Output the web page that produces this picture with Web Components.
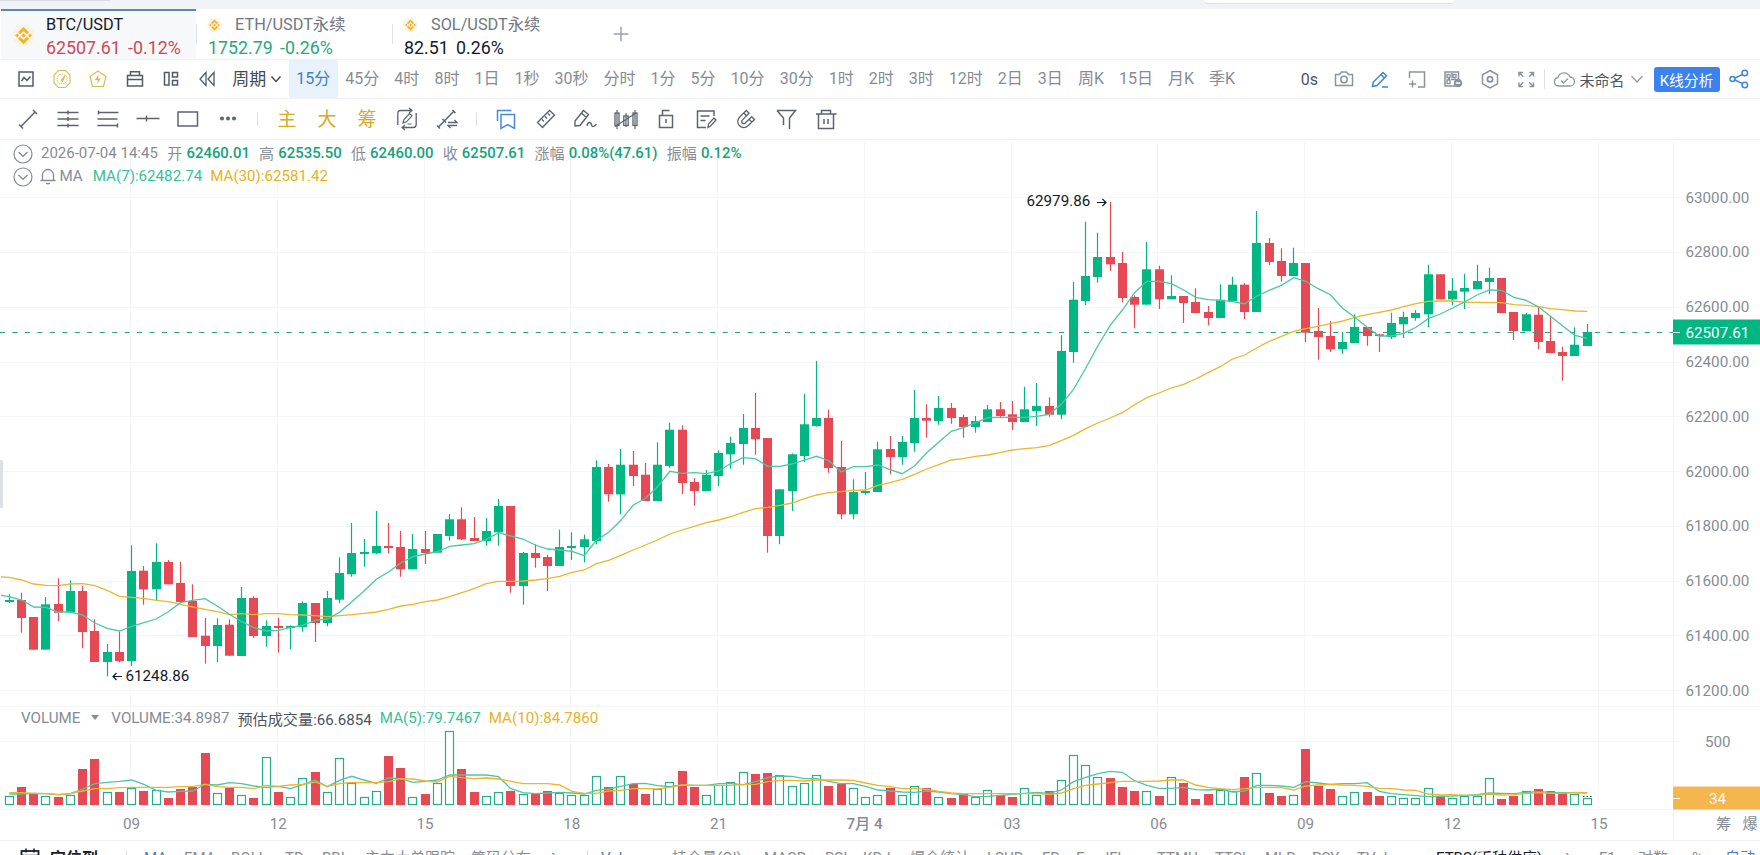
<!DOCTYPE html>
<html lang="zh-CN">
<head>
<meta charset="utf-8">
<title>BTC/USDT</title>
<style>
    html, body { margin: 0; padding: 0; }
    body {
        width: 1760px;
        height: 855px;
        overflow: hidden;
        background: #fff;
        font-family: Roboto, "Noto Sans CJK SC", sans-serif;
        font-size: 15px;
        color: #858c96;
    }
</style>
</head>
<body>
<trade-app></trade-app>

<script>
// small helper: clone a template into an open shadow root
function attach(el, html) {
    const template = document.createElement('template');
    template.innerHTML = html;
    el.attachShadow({ mode: 'open' });
    el.shadowRoot.appendChild(template.content.cloneNode(true));
}

// ---------- icons, all on a 24x24 box ----------
const ICONS = {
    chart: '<rect x="5" y="5" width="14" height="14"/><path d="M7.500 14l2.500-3.500 3 3 3.500-4"/>',
    gauge: '<path d="M8.500 3.500h7l4.500 4.500v8l-4.500 4.500h-7L4 16V8z" stroke-width="1.100"/><circle cx="12" cy="12" r="5" stroke-dasharray="1.500 1" stroke-width="1"/><path d="M11 13.500l4-5-2.500 6z" fill="currentColor" stroke-width="1"/>',
    bolt: '<path d="M12 4l8 5.500-2.500 10h-11L4 9.500z" stroke-width="1.200"/><path d="M12.800 7.500l-4 5.500h3l-.8 4 4-5.500h-3z" fill="currentColor" stroke="none"/>',
    brief: '<rect x="4.500" y="8.500" width="15" height="10.500"/><path d="M7.500 8V4.800h9V8M5 12.500h14"/>',
    layout: '<rect x="5.500" y="5.500" width="4.500" height="12.500"/><rect x="13.500" y="5.500" width="5" height="4.500"/><rect x="13.500" y="13.500" width="5" height="4.500"/>',
    rewind: '<path d="M11 5.500v13L5 12zM19 5.500v13L13 12z" stroke-width="1.300"/>',
    line: '<path d="M5 19.500L19 5M3 17.500l4 4M17 3l4 4"/>',
    lines3: '<path d="M1.500 5.500h21M1.500 12h21M1.500 18.500h21M12 3.500v4M12 10v4M12 16.500v4"/>',
    fib: '<path d="M2 5.500h20.500M1.500 12h20M1.500 18.500h20.500M2.500 3.500v4M21.500 16.500v4"/>',
    cross: '<path d="M.5 11.500h23M10.500 8.500v6"/>',
    rect: '<rect x="2" y="5" width="19.500" height="14"/>',
    dots: '<g fill="currentColor" stroke="none"><circle cx="6" cy="11.500" r="2"/><circle cx="12" cy="11.500" r="2"/><circle cx="18" cy="11.500" r="2"/></g>',
    redo: '<path d="M2.800 18V6.500q0-3 3-3h11M14 1l3 2.500L14 6M21.200 6v11.500q0 3-3 3h-11M10 18l-3 2.500L10 23" stroke-width="1.300"/><path d="M8 16l1-3.500 5.500-6 2.500 2.300-5.500 6zM12.500 17h4" stroke-width="1.200"/>',
    swap: '<path d="M3 20.500L19 4M2 18.500l3 3M17.500 3l3 3M7.500 12l3.500 3.500"/><path d="M13 15.500h9l-2.500-2.500M22 18.500h-9l2.500 2.500" stroke-width="1.300"/>',
    bookmark: '<path d="M7 7.500h13.500v14l-6.800-4-6.700 4zM3.500 14V3.500h14"/>',
    ruler: '<path d="M3.500 15.500L15.500 3.500l5 4.500-12 12.500zM8 12.500l2 2M11 9.500l2 2M14 6.500l2 2" stroke-width="1.400"/>',
    brush: '<path d="M1 19v-5L9.500 3.500l5 4L6 18.500zM7.500 6l5 4.500M13 19c1-5 4-4 4.500-1 .5 2.500 3 1.500 5-1" stroke-width="1.400"/>',
    candles: '<path d="M3 3v19M12 6v14M21 3v19M1 19.500L22 6" stroke-width="1.200"/><rect x="1" y="6" width="4" height="12.500" stroke-width="1.300"/><rect x="9.800" y="9" width="4.400" height="9.500" stroke-width="1.300"/><rect x="19" y="6" width="4" height="12.500" stroke-width="1.300"/>',
    lock: '<rect x="5.500" y="8.500" width="13" height="12"/><path d="M8.500 8V3.500h7M12 12v4"/>',
    note: '<path d="M20 9V4H3.500v16.500H12M6.500 9h9M6.500 13.500h5"/><path d="M14 20.500l.5-3.500 5.500-6 2 2-5.500 6z" stroke-width="1.300"/>',
    magnet: '<path d="M12.300 3.500l-6.800 6.800a6 6 0 0 0 8.500 8.500l6.500-6.300-2.800-2.800-6.500 6.300a2 2 0 0 1-2.900-2.900l6.800-6.800zM9.800 6l2.800 2.800M15 12.300l2.800 2.800" stroke-width="1.300"/>',
    filter: '<path d="M3 3.500h18.500l-6 7.500M3 3.500l6.500 7.500v7M15.500 11v11"/>',
    trash: '<path d="M2 7h20.500M7.500 7V3.500h9V7M4.500 7v14.500h15V7M10 12v5M14 12v5"/>',
    camera: '<path d="M3.500 7.500h4L9.500 5h5l2 2.500h4v11h-17z"/><circle cx="12" cy="12.500" r="3.200"/>',
    pencil: '<path d="M4.500 19.500l.8-4.500L15 5.500l3.500 3.300L9 18.500zM13 7.800l3.300 3.200M14 20h6"/>',
    addbox: '<path d="M4.500 11V5h15v15H13M4 17h7M7.500 13.500v7"/>',
    qr: '<rect x="4" y="5" width="13.500" height="14"/><path d="M6 7.500h3v3H6zM12 7.500h3v3h-3zM6 13h3v3.500H6zM11 6v5M10 12.500h5M7 12h2" stroke-width="1.300"/><circle cx="17" cy="16" r="4.300" fill="currentColor" stroke="none"/><path d="M14.800 16h4.400" stroke="#fff"/>',
    hex: '<path d="M12 3.500l7.500 4.300v9L12 21l-7.500-4.200v-9z"/><circle cx="12" cy="12.300" r="2.600" stroke-width="1.800"/>',
    full: '<path d="M5 9.500V5.500h4M5.300 5.700l4 4M15.500 5.500h4v4M19.200 5.700l-4 4M5 15.500v4h4M5.300 19.300l4-4M19.500 15.500v4h-4M19.200 19.300l-4-4" stroke-width="1.400"/>',
    cloud: '<path d="M6.500 19a4.300 4.300 0 0 1-.6-8.500 6.300 6.300 0 0 1 12-.5 4.500 4.500 0 0 1 .1 9zM9 13.500l2.500 2.500 4.500-4.500" stroke-width="1.300"/>',
    share: '<circle cx="5.500" cy="12" r="2.500"/><circle cx="17.800" cy="6" r="2.800"/><circle cx="17.800" cy="18" r="2.800"/><path d="M8 11l7.500-3.700M8 13l7.500 3.700"/>',
    down: '<path d="M7.500 9.500l4.500 5 4.500-5" stroke-width="1.400"/>',
    downwide: '<path d="M6.500 9l5.500 6 5.500-6" stroke-width="1.200"/>',
    circledown: '<circle cx="12" cy="12" r="9" stroke-width="1.200"/><path d="M7.500 10l4.500 4.300 4.500-4.300" stroke-width="1.300"/>',
    bell: '<path d="M4.500 16.500h15M6.500 16.500V11a5.500 5.500 0 0 1 11 0v5.500M10 19q2 1.500 4 0" stroke-width="1.300"/>',
    plus: '<path d="M12 4v16M4 12h16" stroke-width="1.600"/>',
    calendar: '<rect x="3.500" y="5" width="17" height="16" stroke-width="1.800"/><path d="M3.500 9.500h17M8 2.500v4M16 2.500v4" stroke-width="1.600"/>',
    bnb: '<circle cx="12" cy="12" r="11.500" fill="#f8f3e9" stroke="none"/><g fill="#f5b32a" stroke="none"><path d="M12 3l5.700 5.700-2.100 2.100L12 7.300l-3.600 3.500-2.100-2.100zM12 21l-5.700-5.700 2.100-2.100 3.600 3.500 3.600-3.500 2.100 2.100zM12 9.700l2.300 2.300-2.300 2.300L9.700 12zM5.300 9.900L7.400 12l-2.100 2.100L3.200 12zM18.700 9.900l2.100 2.100-2.100 2.100-2.100-2.100z"/></g>'
};

class TbIcon extends HTMLElement {
    connectedCallback() {
        const size = this.getAttribute('size') || 24;
        attach(this, `<style>
            :host { display: inline-flex; flex: none; }
            svg { display: block; fill: none; stroke: currentColor; stroke-width: 1.5; }
        </style>
        <svg width="${size}" height="${size}" viewBox="0 0 24 24">${ICONS[this.getAttribute('name')]}</svg>`);
    }
}
customElements.define('tb-icon', TbIcon);

// ---------- symbol tabs ----------
class MarketTab extends HTMLElement {
    connectedCallback() {
        attach(this, `<style>
            :host { display: flex; box-sizing: border-box; width: 196px; height: 50px; padding: 4px 0 0 12px; font-size: 16.300px; line-height: 23px; color: #6f7782; }
            :host([active]) { padding: 2px 0 0 11px; margin-left: 1px; width: 195px; border-top: 2px solid #5c87b4; background: #f6f8fa; }
            .main { align-self: center; margin: 0 11px 2px 0; }
            :host(:not([active])) .main, :host([active]) .mini { display: none; }
            .mini { margin: 0 13px 0 -1px; width: 15px; justify-content: flex-end; }
            .name { display: flex; align-items: center; }
            :host([active]) .name { color: #121b2b; }
            .price { font-size: 17.800px; line-height: 24px; word-spacing: 3px; }
            ::slotted([slot=price]) { white-space: pre; }
        </style>
        <tb-icon class="main" name="bnb" size="23"></tb-icon>
        <div>
            <div class="name"><tb-icon class="mini" name="bnb" size="16"></tb-icon><slot></slot></div>
            <div class="price"><slot name="price"></slot></div>
        </div>`);
    }
}
customElements.define('market-tab', MarketTab);

class MarketTabs extends HTMLElement {
    connectedCallback() {
        attach(this, `<style>
            :host { display: flex; align-items: center; height: 50px; border-bottom: 1px solid #eff1f4; }
            i { width: 1px; height: 20px; margin-right: -1px; background: #dfe2e6; }
            .plus { margin-left: 22px; color: #999fa8; }
        </style>
        <market-tab active>BTC/USDT<span slot="price" style="color:#cb4a59">62507.61 -0.12%</span></market-tab><i></i>
        <market-tab>ETH/USDT永续<span slot="price" style="color:#27a781">1752.79 -0.26%</span></market-tab><i></i>
        <market-tab>SOL/USDT永续<span slot="price" style="color:#121b2b">82.51 0.26%</span></market-tab>
        <tb-icon class="plus" name="plus" size="22"></tb-icon>`);
    }
}
customElements.define('market-tabs', MarketTabs);

// ---------- period toolbar ----------
const PERIODS = ['15分', '45分', '4时', '8时', '1日', '1秒', '30秒', '分时', '1分', '5分', '10分', '30分', '1时', '2时', '3时', '12时', '2日', '3日', '周K', '15日', '月K', '季K'];

class PeriodBar extends HTMLElement {
    connectedCallback() {
        const left = ['chart', 'gauge', 'bolt', 'brief', 'layout', 'rewind'];
        const right = ['camera', 'pencil', 'addbox', 'qr', 'hex', 'full'];
        attach(this, `<style>
            :host { display: flex; align-items: center; height: 38px; padding-left: 7.500px; border-bottom: 1px solid #eff1f4; font-size: 16px; white-space: nowrap; }
            .ic { width: 36.300px; display: flex; justify-content: center; color: #525c69; }
            .gauge, .bolt { color: #d8bb55; }
            .cycle { display: flex; align-items: center; width: 63.500px; box-sizing: border-box; padding-left: 7px; color: #414a56; font-size: 17px; line-height: 36px; }
            .cycle tb-icon { margin-left: -2px; }
            .p { height: 38px; line-height: 37px; padding: 0 7.530px; }
            .p.on { background: #e8f2fc; color: #3e7ec5; }
            .right { display: flex; align-items: center; margin-left: auto; padding-right: 9px; color: #4c5561; }
            .right .ic { width: 36.500px; color: #8b929b; }
            .right .pencil { color: #3f85da; }
            .sec { margin-right: 7.500px; }
            .bar { width: 1px; height: 20px; background: #dde0e4; margin-right: 7px; }
            .name { font-size: 15px; margin-left: 3px; }
            button { width: 66px; height: 25px; margin: 0 7.500px 0 5px; padding: 0; border: 0; border-radius: 3px; background: #3b82ec; color: #fff; font: 14.800px Roboto, "Noto Sans CJK SC", sans-serif; }
        </style>
        ${left.map(n => `<div class="ic ${n}"><tb-icon name="${n}"></tb-icon></div>`).join('')}
        <div class="cycle">周期<tb-icon name="down"></tb-icon></div>
        ${PERIODS.map((p, i) => `<div class="p${i ? '' : ' on'}">${p}</div>`).join('')}
        <div class="right">
            <span class="sec">0s</span>
            ${right.map(n => `<div class="ic ${n}"><tb-icon name="${n}"></tb-icon></div>`).join('')}
            <div class="bar"></div>
            <tb-icon name="cloud" style="color:#9298a1"></tb-icon>
            <span class="name">未命名</span>
            <tb-icon name="downwide" style="color:#9298a1"></tb-icon>
            <button>K线分析</button>
            <tb-icon name="share" style="color:#3f85da"></tb-icon>
        </div>`);
    }
}
customElements.define('period-bar', PeriodBar);

// ---------- drawing toolbar ----------
class DrawBar extends HTMLElement {
    connectedCallback() {
        const items = ['line', 'lines3', 'fib', 'cross', 'rect', 'dots', '|', '主', '大', '筹', 'redo', 'swap', '|',
            'bookmark', 'ruler', 'brush', 'candles', 'lock', 'note', 'magnet', 'filter', 'trash'];
        attach(this, `<style>
            :host { display: flex; align-items: center; height: 40px; padding-left: 8px; border-bottom: 1px solid #eff1f4; color: #5b6470; }
            div { width: 40px; display: flex; justify-content: center; }
            .sep { width: 19px; }
            .sep i { width: 1px; height: 14px; background: #dcdfe3; }
            .txt { font-size: 19px; line-height: 36px; margin-top: 1px; color: #dba91f; }
            .bookmark { color: #4a8bd8; }
        </style>` + items.map(n => {
            if (n === '|') return '<div class="sep"><i></i></div>';
            if (!ICONS[n]) return `<div class="txt">${n}</div>`;
            return `<div class="${n}"><tb-icon name="${n}"></tb-icon></div>`;
        }).join(''));
    }
}
customElements.define('draw-bar', DrawBar);

// ---------- chart data ----------
// Each block holds consecutive 15m bars, y values are thirds of a pixel below `top`.
// bar: direction, body top, body bottom, high, low
const BLOCKS = [
    { top: 440, bars: `g 480 486 463 489,r 480 534 458 578,r 531 629 531 629,g 493 629 471 629,r 492 518 415 544,g 453 517 421 520,r 453 576 438 625,r 573 666 538 666,g 636 666 612 709,r 636 663 575 667,g 393 663 316 678,r 392 448 378 494,g 366 448 310 480,r 366 433 360 433,r 429 486 366 486,r 483 591 433 591,r 587 618 534 671,g 555 618 535 666,r 554 647 538 647,g 474 648 441 648,r 474 588 469 594,g 558 588 541 620,r 558 564 534 638,g 558 564 556 628,g 489 561 484 575,r 489 549 489 606,g 474 549 453 559,g 399 479 352 490,g 339 403 249 410,g 336 342 297 380,g 318 340 213 343,r 318 324 249 340,r 321 388 273 410,g 327 388 282 388,r 327 339 273 372,g 282 338 282 338`,
      ma7: '470 480 501 502 516 516 525 549 565 573 559 548 537 515 488 481 476 498 523 545 563 573 571 562 556 541 537 517 485 453 418 396 369 350 342 335',
      ma30: '412 420 432 436 437 432 431 437 451 469 472 475 481 485 493 501 508 515 524 521 524 521 521 524 525 527 530 527 524 520 516 508 498 493 485 480' },
    { top: 380, bars: `g 418 468 402 482,r 418 478 382 480,r 474 483 411 483,g 453 483 414 497,g 378 457 357 497,r 378 618 378 638,g 519 618 516 674,r 519 534 493 563,r 531 558 524 633,g 501 558 449 558,g 498 504 457 540,g 478 501 464 547,g 261 483 241 493,r 261 343 252 365,g 254 343 207 403,r 254 288 213 318,r 284 363 249 363,g 254 363 187 363,g 149 258 128 263,r 149 309 136 342,r 306 333 294 377,g 284 333 270 333,g 219 288 211 318,g 189 223 170 266,g 144 192 102 254,r 144 178 39 224,r 174 468 174 518,g 328 468 328 493,g 223 333 220 393,g 133 228 41 246,g 114 138 -57 140,r 114 264 89 278,r 261 403 183 418,g 336 403 298 418,g 333 339 276 344,g 208 336 185 336`,
      ma7: '499 495 491 478 458 468 477 495 507 510 514 527 481 457 421 376 355 320 274 280 278 281 273 250 233 236 259 259 252 240 229 242 276 260 260 255',
      ma30: '650 638 626 611 604 604 603 600 596 589 577 570 551 541 526 510 495 480 462 450 439 428 420 410 397 386 382 376 369 356 345 338 335 331 330 316' },
    { top: 180, bars: `r 807 831 768 883,g 786 831 768 854,g 714 789 630 815,r 714 722 673 773,g 684 723 648 734,r 684 714 669 731,r 711 741 704 773,g 723 741 708 758,g 688 726 675 726,r 688 708 666 711,r 703 726 663 750,g 688 726 620 726,g 678 693 609 738,r 678 704 652 710,g 513 704 466 718,g 359 516 306 548,g 288 363 125 375,g 231 291 158 308,r 231 253 66 273,r 249 354 216 367,r 351 374 346 445,g 268 374 186 374,r 268 358 257 387,g 348 358 286 358,r 348 369 348 429,r 366 399 325 399,r 396 414 378 436,g 359 414 313 414,g 314 363 290 363,r 314 396 309 417,g 189 396 93 396,r 189 246 174 255,r 243 288 205 305,g 249 288 203 288,r 249 458 249 486`,
      ma7: '869 881 858 818 786 754 743 728 713 712 712 712 709 703 673 628 565 497 436 390 338 304 304 311 330 352 359 361 365 371 348 331 316 293 304',
      ma30: '908 898 883 867 854 840 836 829 825 818 810 806 803 797 782 766 746 729 714 698 674 653 639 624 613 597 578 560 537 525 503 484 469 454 446' },
    { top: 220, bars: `r 333 351 264 419,r 348 388 303 396,g 366 388 336 402,g 321 369 283 369,r 321 348 321 377,r 343 348 341 396,g 309 351 278 357,g 291 313 275 354,g 279 294 270 302,g 163 283 134 322,r 163 238 163 238,g 212 238 174 256,g 204 215 161 267,g 183 208 134 208,g 174 186 143 223,r 174 279 174 279,r 276 333 276 360,g 283 333 279 333,r 284 366 261 388,r 363 399 289 399,r 396 408 380 482,g 374 408 322 408,g 336 378 312 378`,
      ma7: '206 224 265 292 322 348 348 340 322 296 282 264 245 225 210 211 232 241 260 289 318 346 355',
      ma30: '319 311 303 292 284 277 270 260 251 244 243 243 247 247 248 248 254 256 260 266 269 273 274' }
];

const VOLUME = '319 292 310 318 321 315 238 208 307 306 295 303 300 324 298 290 189 310 294 315 324 202 306 322 265 246 307 205 279 322 304 198 234 322 313 280 124 238 306 319 307 303 311 312 303 310 315 315 259 292 259 282 313 297 277 243 292 315 285 277 247 253 249 254 289 280 255 288 283 295 322 316 294 316 289 295 322 325 313 322 300 316 321 295 316 303 271 195 226 262 264 291 303 304 319 262 279 328 313 300 304 261 250 309 318 316 178 287 298 319 307 306 318 319 325 325 295 318 325 319 317 265 327 318 304 298 303 309 311 325'.split(' ');
// a few volume bars are coloured against their candle body
const VOLUME_DIR = { 22: 'r', 23: 'g', 24: 'g', 25: 'r' };
const VMA5 = '312 312 310 311 314 311 297 281 277 274 270 283 301 306 304 303 283 285 278 281 288 292 289 296 284 270 290 271 259 270 280 264 266 277 274 270 255 255 255 255 260 296 308 311 309 307 309 312 301 297 289 281 280 287 290 285 286 286 281 281 284 275 263 258 259 266 266 274 281 281 289 300 303 306 307 303 306 311 314 320 319 316 313 310 307 310 300 275 262 251 244 247 272 286 295 295 292 299 300 297 306 303 286 286 288 292 275 279 283 281 281 278 304 311 314 317 320 319 318 316 314 309 310 311 307 305 307 308 308 309'.split(' ');
const VMA10 = '308 308 310 311 314 311 303 296 296 293 292 292 292 292 290 290 283 290 292 292 296 286 289 285 283 276 289 281 277 278 278 275 266 267 273 276 259 263 266 264 267 274 281 281 281 285 304 310 310 303 301 296 296 297 292 285 286 286 286 286 284 283 275 271 271 273 270 270 270 271 279 286 290 296 296 298 304 309 311 311 311 311 311 311 310 314 309 296 286 282 278 274 274 274 273 270 270 285 292 296 299 296 292 292 293 300 288 285 283 285 286 289 295 296 300 301 312 315 314 316 316 312 315 314 311 308 310 310 307 308'.split(' ');

const UP = '#00b783';
const DOWN = '#e54a54';
const barX = i => 9.3 + 12.232 * i;

class KlineChart extends HTMLElement {
    connectedCallback() {
        attach(this, `<style>
            :host { display: block; position: relative; height: 700px; }
            svg { display: block; }
            text { font-size: 15.200px; fill: #858c96; }
            .note { fill: #10192a; }
            .legend { position: absolute; left: 11px; top: 1px; display: flex; flex-direction: column; }
            .row { display: flex; align-items: center; height: 23px; white-space: pre; }
            .row tb-icon { margin-right: 6px; position: relative; top: 1.500px; }
            .row .bell { margin: 0 -.5px 0 -5px; top: 0; }
            .row.ma, .row.vol { font-size: 15.150px; }
            b { font-weight: 500; font-size: 14.900px; color: #14a37c; margin: 0 9.200px 0 4.200px; }
            .vol { position: absolute; left: 21px; top: 566px; }
            .handle { position: absolute; left: 0; top: 320px; width: 3px; height: 48px; background: #dde0e5; border-radius: 0 2px 2px 0; }
            em { display: block; margin: 0 12px 0 11px; border: 4.500px solid transparent; border-top: 5px solid #858c96; border-bottom: 0; }
        </style>
        <svg width="1760" height="700" viewBox="0 140 1760 700"></svg>
        <div class="legend">
            <div class="row"><tb-icon name="circledown"></tb-icon>2026-07-04 14:45<span style="width:9.500px"></span>开<b>62460.01</b>高<b>62535.50</b>低<b>62460.00</b>收<b>62507.61</b>涨幅<b>0.08%(47.61)</b>振幅<b>0.12%</b></div>
            <div class="row ma"><tb-icon name="circledown"></tb-icon><tb-icon class="bell" name="bell"></tb-icon>MA<span style="color:#37c09a;margin:0 8px 0 10px">MA(7):62482.74</span><span style="color:#e9b11e">MA(30):62581.42</span></div>
        </div>
        <div class="row vol">VOLUME<em></em>VOLUME:34.8987<span style="color:#4c535d;margin:0 8px">预估成交量:66.6854</span><span style="color:#37c09a;margin-right:8px">MA(5):79.7467</span><span style="color:#e9b11e">MA(10):84.7860</span></div>
        <div class="handle"></div>`);
        this.shadowRoot.querySelector('svg').innerHTML = this.grid() + this.candles() + this.volume() + this.axes();
    }

    grid() {
        let out = '';
        const h = (y, x2) => `<path d="M0 ${y}H${x2}" stroke="#f5f6f8"/>`;
        for (let k = 0; k < 10; k++) out += h(Math.round(197.3 + 54.77 * k) + 0.5, 1680);
        out += h(706.5, 1760) + h(741.5, 1680) + h(809.5, 1760);
        for (let k = 0; k < 11; k++) out += `<path d="M${Math.round(131 + 146.75 * k) - 0.5} 142V809" stroke="#f5f6f8"/>`;
        return out + '<path d="M1673.500 142V840" stroke="#f0f2f5"/>';
    }

    candles() {
        let out = '', i = 0;
        const ma7 = ['1,595.300'], ma30 = ['1,577'];
        this.dirs = [];
        BLOCKS.forEach(b => {
            const y = v => (b.top + v / 3).toFixed(1);
            const m7 = b.ma7.split(' '), m30 = b.ma30.split(' ');
            b.bars.split(',').forEach((bar, k) => {
                const [dir, t, bt, hi, lo] = bar.split(' ');
                const x = Math.round(barX(i) - 0.5) + 0.5;
                const c = dir === 'g' ? UP : DOWN;
                out += `<path d="M${x} ${y(hi)}V${y(lo)}" stroke="${c}" stroke-width="1.200"/>
                    <rect x="${x - 4.5}" y="${y(t)}" width="9" height="${((bt - t) / 3).toFixed(1)}" fill="${c}"/>`;
                ma7.push(barX(i).toFixed(1) + ',' + y(m7[k]));
                ma30.push(barX(i).toFixed(1) + ',' + y(m30[k]));
                this.dirs.push(dir);
                i++;
            });
        });
        return out +
            '<path d="M0 332.500H1673" stroke="#2f9c80" stroke-dasharray="5 7.460"/>' +
            `<polyline points="${ma30.join(' ')}" fill="none" stroke="#edb52c" stroke-width="1.300"/>` +
            `<polyline points="${ma7.join(' ')}" fill="none" stroke="#4cc7a5" stroke-width="1.300"/>`;
    }

    volume() {
        let out = '';
        VOLUME.forEach((v, i) => {
            const x = Math.round(barX(i) - 0.5) + 0.5;
            const top = Math.round(690 + v / 3);
            const dir = VOLUME_DIR[i] || this.dirs[i];
            out += dir === 'g'
                ? `<rect x="${x - 4}" y="${top + 0.5}" width="8" height="${804 - top}" fill="#fff" stroke="#25ae87" stroke-width="1.200"/>`
                : `<rect x="${x - 4.5}" y="${top}" width="9" height="${805 - top}" fill="${DOWN}"/>`;
        });
        const line = (a, c) => `<polyline points="${a.map((v, i) => barX(i).toFixed(1) + ',' + (690 + v / 3).toFixed(1)).join(' ')}" fill="none" stroke="${c}" stroke-width="1.300"/>`;
        return out + '<path d="M1583 796.500h9" stroke="#333" stroke-dasharray="1.500 2"/>' + line(VMA5, '#4cc7a5') + line(VMA10, '#edb52c');
    }

    axes() {
        let out = '';
        for (let k = 0; k < 10; k++)
            out += `<text x="1685.500" y="${(202.6 + 54.77 * k).toFixed(1)}">${63000 - 200 * k}.00</text>`;
        ['09', '12', '15', '18', '21', '', '03', '06', '09', '12', '15'].forEach((t, k) => {
            out += `<text x="${131.5 + 146.75 * k}" y="828.700" text-anchor="middle">${t}</text>`;
        });
        return out +
            '<text x="864.600" y="828.700" text-anchor="middle" font-weight="500">7月 4</text>' +
            '<text x="1705" y="746.500">500</text>' +
            '<text x="1716" y="829">筹</text><text x="1742.500" y="829">爆</text>' +
            `<rect x="1673" y="319.500" width="87" height="25" fill="${UP}"/><path d="M1673 332.500h7" stroke="#fff"/>` +
            '<text x="1685.500" y="337.500" style="fill:#fff">62507.61</text>' +
            '<rect x="1673" y="786.500" width="87" height="23" fill="#f6b64e"/><path d="M1673 798.500h7" stroke="#fff"/>' +
            '<text x="1709" y="804" style="fill:#fff">34</text>' +
            '<text class="note" x="125.500" y="680.500">61248.86</text><path d="M122 676.500h-9M116.500 673l-3.500 3.500 3.500 3.500" fill="none" stroke="#10192a" stroke-width="1.200"/>' +
            '<text class="note" x="1026.500" y="206">62979.86</text><path d="M1097 202.500h9M1102.500 199l3.500 3.500-3.500 3.500" fill="none" stroke="#10192a" stroke-width="1.200"/>';
    }
}
customElements.define('kline-chart', KlineChart);

// ---------- indicator strip, cut off by the window edge ----------
class IndicatorBar extends HTMLElement {
    connectedCallback() {
        // label, slot width, class
        const items = [['MA', 40, 'on'], ['EMA', 47], ['BOLL', 54], ['TD', 37], ['BBI', 43], ['主力大单跟踪', 106], ['筹码分布', 80], ['›', 36, 'more'],
            ['|', 14], ['Volume', 71, 'on'], ['持仓量(OI)', 92], ['MACD', 61], ['RSI', 38], ['KDJ', 47], ['爆仓统计', 77], ['LSUR', 55], ['FR', 34],
            ['FundFlow', 81], ['TTMU', 58], ['TTSI', 50], ['MLR', 47], ['PSY', 45], ['TVol', 79], ['ETBS(币种供应)', 129, 'dark'], ['›', 34, 'more'],
            ['F1', 39], ['对数', 54], ['%', 33], ['自动', 35, 'on']];
        attach(this, `<style>
            :host { display: flex; height: 14px; overflow: hidden; border-top: 1px solid #eff1f4; line-height: 35px; white-space: nowrap; }
            div { flex: none; }
            .loc { display: flex; box-sizing: border-box; width: 124px; padding-left: 18px; color: #18202e; font-size: 16px; font-weight: 700; }
            .loc tb-icon { margin: 5px 8px 0 0; }
            .sep { border-left: 1px solid #dde0e4; margin-top: 9px; box-sizing: border-box; height: 15px; }
            .on { color: #3b7fd0; }
            .dark { color: #18202e; }
            .more { font-size: 20px; line-height: 30px; }
        </style>
        <div class="loc"><tb-icon name="calendar"></tb-icon>定位到</div>
        <div class="sep" style="width:17px;margin-left:2px;margin-right:1px"></div>` +
            items.map(([t, w, c]) => t === '|' ? `<div class="sep" style="width:${w}px"></div>` : `<div class="${c || ''}" style="width:${w}px">${t}</div>`).join(''));
    }
}
customElements.define('indicator-bar', IndicatorBar);

class TradeApp extends HTMLElement {
    connectedCallback() {
        attach(this, `<style>
            :host { display: flex; flex-direction: column; width: 1760px; height: 855px; overflow: hidden; }
            .strip { display: flex; justify-content: space-between; height: 9px; background: #f1f3f7; }
            .strip span { width: 110px; height: 1px; background: #d9dce1; }
            .strip i { width: 250px; height: 3px; margin-right: 306px; background: #fff; border-bottom: 1px solid #dcdfe4; border-radius: 0 0 5px 5px; }
        </style>
        <div class="strip"><span></span><i></i></div>
        <market-tabs></market-tabs>
        <period-bar></period-bar>
        <draw-bar></draw-bar>
        <kline-chart></kline-chart>
        <indicator-bar></indicator-bar>`);
    }
}
customElements.define('trade-app', TradeApp);
</script>
</body>
</html>
